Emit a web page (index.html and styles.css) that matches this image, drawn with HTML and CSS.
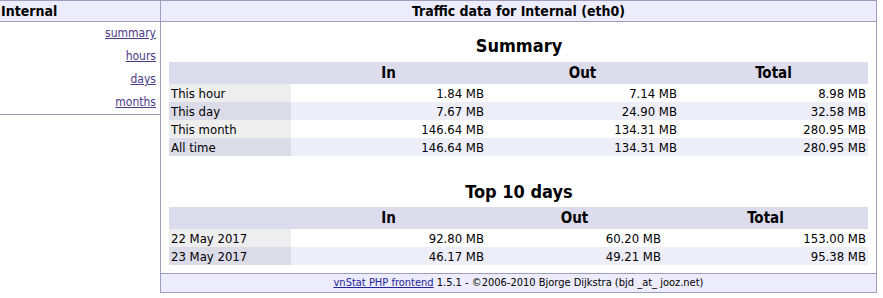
FILE: index.html
```html
<!DOCTYPE html>
<html lang="en">
<head>
    <meta charset="UTF-8">
    <title>vnStat - Internal</title>
    <link rel="stylesheet" href="styles.css">
</head>
<body>

    <div class="wrap">
        <div class="sidebar">
            <div class="iface">Internal</div>
            <ul class="nav">
                <li><a href="#">summary</a></li>
                <li><a href="#">hours</a></li>
                <li><a href="#">days</a></li>
                <li><a href="#">months</a></li>
            </ul>
        </div>

        <div class="content">
            <div class="header">Traffic data for Internal (eth0)</div>

            <div class="main">
                <h2>Summary</h2>
                <table class="stats summary">
                    <colgroup>
                        <col class="col-label">
                        <col class="col-in">
                        <col class="col-out">
                        <col>
                    </colgroup>
                    <tr>
                        <th></th>
                        <th>In</th>
                        <th>Out</th>
                        <th>Total</th>
                    </tr>
                    <tr class="odd">
                        <td class="label">This hour</td>
                        <td>1.84 MB</td>
                        <td>7.14 MB</td>
                        <td>8.98 MB</td>
                    </tr>
                    <tr class="even">
                        <td class="label">This day</td>
                        <td>7.67 MB</td>
                        <td>24.90 MB</td>
                        <td>32.58 MB</td>
                    </tr>
                    <tr class="odd">
                        <td class="label">This month</td>
                        <td>146.64 MB</td>
                        <td>134.31 MB</td>
                        <td>280.95 MB</td>
                    </tr>
                    <tr class="even">
                        <td class="label">All time</td>
                        <td>146.64 MB</td>
                        <td>134.31 MB</td>
                        <td>280.95 MB</td>
                    </tr>
                </table>

                <h2 class="second">Top 10 days</h2>
                <table class="stats top10">
                    <colgroup>
                        <col class="col-label">
                        <col class="col-in">
                        <col class="col-out">
                        <col>
                    </colgroup>
                    <tr>
                        <th></th>
                        <th>In</th>
                        <th>Out</th>
                        <th>Total</th>
                    </tr>
                    <tr class="odd">
                        <td class="label">22 May 2017</td>
                        <td>92.80 MB</td>
                        <td>60.20 MB</td>
                        <td>153.00 MB</td>
                    </tr>
                    <tr class="even">
                        <td class="label">23 May 2017</td>
                        <td>46.17 MB</td>
                        <td>49.21 MB</td>
                        <td>95.38 MB</td>
                    </tr>
                </table>
            </div>

            <div class="footer">
                <a href="#">vnStat PHP frontend</a> 1.5.1 - &copy;2006-2010 Bjorge Dijkstra (bjd _at_ jooz.net)
            </div>
        </div>
    </div>

</body>
</html>
```

FILE: styles.css
```css
/* vnStat light theme */
body {
    margin: 0;
    background: #fff;
    color: #000;
    font-family: 'DejaVu Sans Condensed', 'DejaVu Sans', sans-serif;
    font-size: 13px;
}

.wrap {
    display: flex;
    align-items: flex-start;
}

/* sidebar */
.sidebar {
    width: 160px;
    flex-shrink: 0;
    border-top: 1px solid #9d9dbd;
    border-bottom: 1px solid #9d9dbd;
}

.iface {
    height: 20px;
    line-height: 20px;
    padding-left: 1px;
    background: #ececfc;
    border-bottom: 1px solid #9d9dbd;
    font-size: 14px;
    font-weight: bold;
}

.nav {
    list-style: none;
    margin: 0;
    padding: 0 4px 0 0;
    text-align: right;
}

.nav li {
    height: 23px;
    line-height: 23px;
    font-size: 12px;
}

.nav a {
    color: #4b3a86;
}

/* main panel */
.content {
    width: 717px;
    box-sizing: border-box;
    border: 1px solid #9d9dbd;
}

.header {
    height: 20px;
    line-height: 20px;
    background: #ececfc;
    border-bottom: 1px solid #9d9dbd;
    text-align: center;
    font-size: 14px;
    font-weight: bold;
}

.main {
    padding: 12px 7px 8px 8px;
}

h2 {
    margin: 0 0 4px;
    height: 24px;
    line-height: 24px;
    text-align: center;
    font-size: 18px;
}

h2.second {
    margin-bottom: 3px;
}

.stats {
    width: 699px;
    border-collapse: collapse;
    table-layout: fixed;
}

.summary {
    margin-bottom: 24px;
}

.col-label {
    width: 122px;
}

.col-in {
    width: 195px;
}

.summary .col-out {
    width: 193px;
}

.top10 .col-out {
    width: 177px;
}

.stats th {
    height: 22px;
    padding: 0;
    background: #dcdcec;
    font-size: 15px;
    font-weight: bold;
    text-align: center;
}

.stats td {
    height: 18px;
    padding: 0 2px;
    text-align: right;
    white-space: nowrap;
}

.stats td.label {
    text-align: left;
}

.odd td {
    background: #fff;
}

.odd td.label {
    background: #eeeeee;
}

.even td {
    background: #eeeef9;
}

.even td.label {
    background: #dcdce9;
}

.footer {
    height: 18px;
    line-height: 18px;
    background: #ececfc;
    border-top: 1px solid #9d9dbd;
    text-align: center;
    font-size: 11px;
}

.footer a {
    color: #24249a;
}
```
